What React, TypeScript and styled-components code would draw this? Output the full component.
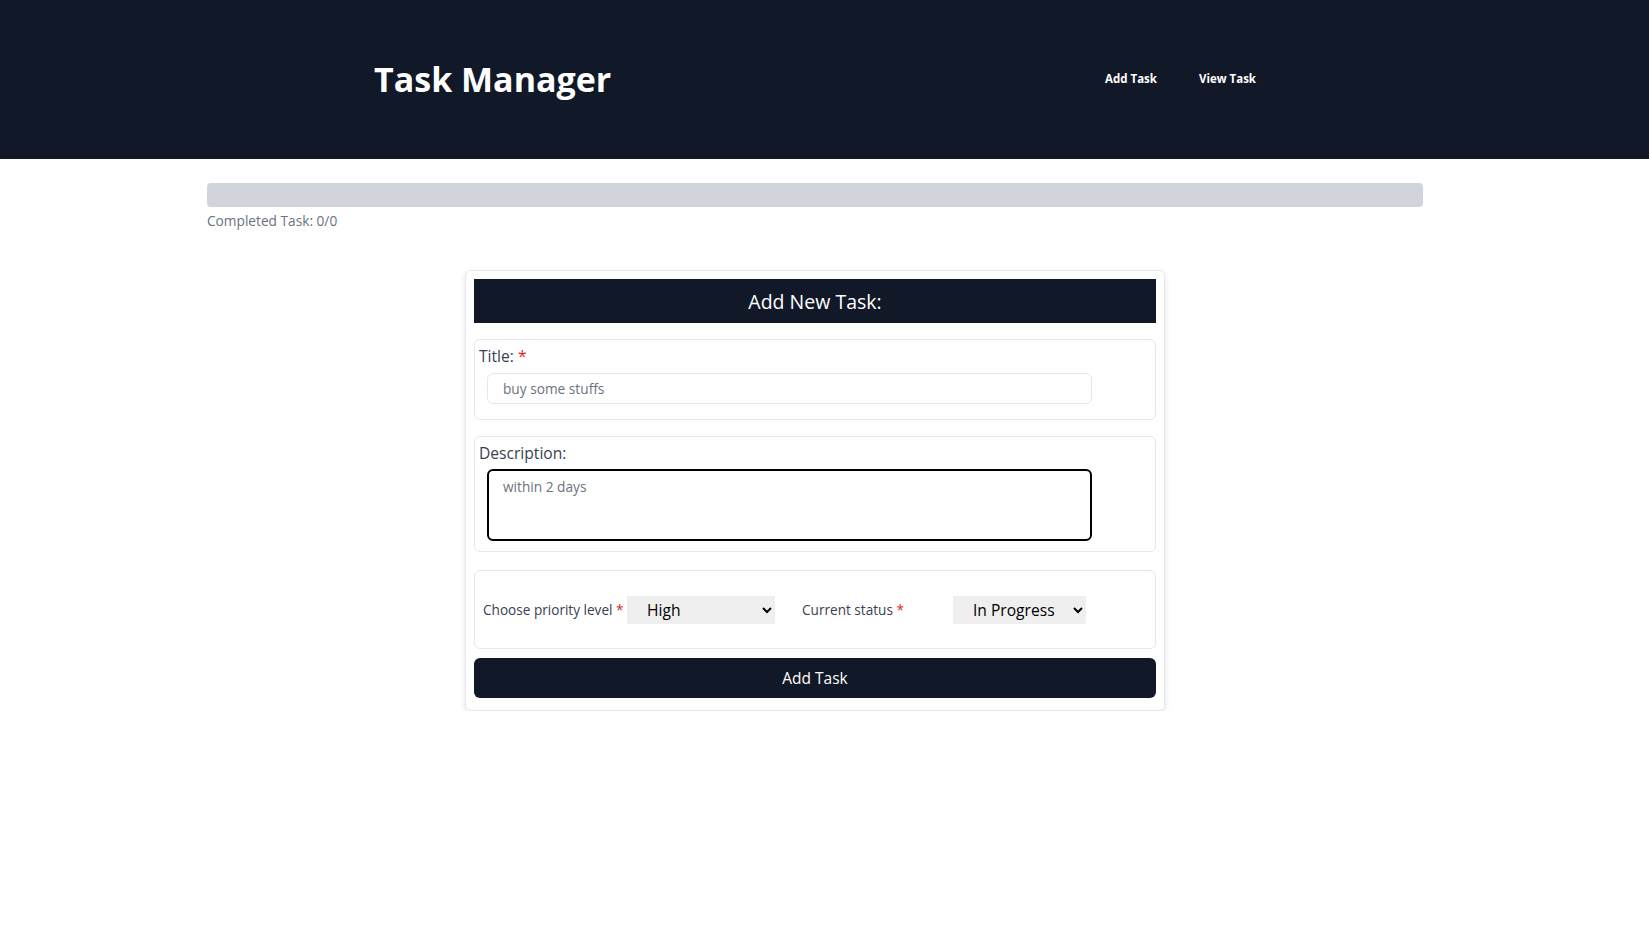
import React, { useEffect, useRef } from "react";
import styled, { createGlobalStyle } from "styled-components";

const Global = createGlobalStyle`
  html, body { margin: 0; padding: 0; background: #ffffff; }
  body { font-family: "Open Sans", "Noto Sans", sans-serif; }
  * { box-sizing: border-box; }
`;

const FONT = `"Open Sans", "Noto Sans", sans-serif`;

const Header = styled.header`
  background: #111827;
  height: 159px;
  width: 100%;
`;

const HeaderInner = styled.div`
  width: 1630px;
  height: 100%;
  padding: 0 374px;
  display: flex;
  align-items: center;
  justify-content: space-between;
`;

const Brand = styled.h1`
  margin: 0 0 2px;
  color: #ffffff;
  font-family: ${FONT};
  font-weight: 700;
  font-size: 34px;
`;

const Nav = styled.nav`
  display: flex;
  gap: 42px;
  margin-bottom: 2px;
`;

const NavLink = styled.a`
  color: #ffffff;
  font-family: ${FONT};
  font-weight: 700;
  font-size: 11.5px;
  text-decoration: none;
  cursor: pointer;
`;

const Main = styled.main`
  width: 1630px;
  padding: 24px 207px 0;
`;

const ProgressTrack = styled.div`
  height: 24px;
  background: #d1d5db;
  border-radius: 4px;
  overflow: hidden;
`;

const ProgressFill = styled.div`
  height: 100%;
  background: #111827;
`;

const ProgressText = styled.p`
  margin: 4px 0 0;
  font-family: ${FONT};
  font-size: 13.7px;
  color: #6b7280;
`;

const Card = styled.form`
  width: 700px;
  margin: 40px auto 0;
  border: 1px solid #e5e7eb;
  border-radius: 6px;
  padding: 8px 8px 12px;
  box-shadow: 0 3px 6px rgba(0, 0, 0, 0.1);
  display: flex;
  flex-direction: column;
`;

const CardTitle = styled.h2`
  margin: 0 0 16px;
  height: 44px;
  background: #111827;
  color: #ffffff;
  font-family: ${FONT};
  font-weight: 400;
  font-size: 19.5px;
  display: flex;
  align-items: center;
  justify-content: center;
`;

const Section = styled.div<{ $pb: number; $mb: number }>`
  border: 1px solid #e5e7eb;
  border-radius: 6px;
  padding: 4px 4px ${(p) => p.$pb}px;
  margin-bottom: ${(p) => p.$mb}px;
`;

const Label = styled.label`
  display: block;
  font-family: ${FONT};
  font-size: 15.6px;
  line-height: 24px;
  color: #374151;
`;

const Star = styled.span`
  color: #dc2626;
`;

const TextInput = styled.input`
  display: block;
  width: 605px;
  height: 31px;
  margin: 5px 0 0 8px;
  padding: 0 15px;
  border: 1px solid #e5e7eb;
  border-radius: 6px;
  font-family: ${FONT};
  font-size: 13.7px;
  color: #6b7280;
  outline: none;
`;

const TextArea = styled.textarea`
  display: block;
  width: 605px;
  height: 72px;
  margin: 4px 0 0 8px;
  padding: 6px 14px;
  border: 2px solid #000000;
  border-radius: 6px;
  font-family: ${FONT};
  font-size: 13.7px;
  color: #6b7280;
  resize: none;
  outline: none;
  caret-color: #000000;
`;

const OptionsSection = styled.div`
  border: 1px solid #e5e7eb;
  border-radius: 6px;
  height: 79px;
  margin-bottom: 9px;
  padding: 0 8px;
  display: flex;
  align-items: center;
`;

const InlineLabel = styled.label<{ $w: number }>`
  width: ${(p) => p.$w}px;
  font-family: ${FONT};
  font-size: 13.6px;
  color: #374151;
  flex-shrink: 0;
`;

const Select = styled.select<{ $w: number; $mr: number }>`
  width: ${(p) => p.$w}px;
  height: 28px;
  margin-right: ${(p) => p.$mr}px;
  border: none;
  background-color: #efefef;
  font-family: ${FONT};
  font-size: 15.6px;
  color: #000000;
  padding: 0 4px 0 16px;
  outline: none;
`;

const SubmitButton = styled.button`
  height: 40px;
  border: none;
  border-radius: 6px;
  background: #111827;
  color: #ffffff;
  font-family: ${FONT};
  font-size: 15.5px;
  cursor: pointer;
`;

export default function App() {
  const areaRef = useRef<HTMLTextAreaElement>(null);
  useEffect(() => {
    const el = areaRef.current;
    if (el) {
      el.focus();
      el.setSelectionRange(el.value.length, el.value.length);
    }
  }, []);

  return (
    <>
      <Global />
      <Header>
        <HeaderInner>
          <Brand>Task Manager</Brand>
          <Nav>
            <NavLink>Add Task</NavLink>
            <NavLink>View Task</NavLink>
          </Nav>
        </HeaderInner>
      </Header>
      <Main>
        <ProgressTrack>
          <ProgressFill style={{ width: "0%" }} />
        </ProgressTrack>
        <ProgressText>Completed Task: 0/0</ProgressText>
        <Card onSubmit={(e) => e.preventDefault()}>
          <CardTitle>Add New Task:</CardTitle>
          <Section $pb={15} $mb={16}>
            <Label>
              Title: <Star>*</Star>
            </Label>
            <TextInput defaultValue="buy some stuffs" />
          </Section>
          <Section $pb={10} $mb={18}>
            <Label>Description:</Label>
            <TextArea ref={areaRef} defaultValue="within 2 days" />
          </Section>
          <OptionsSection>
            <InlineLabel $w={144}>
              Choose priority level <Star>*</Star>
            </InlineLabel>
            <Select $w={148} $mr={27} defaultValue="High">
              <option>Low</option>
              <option>Medium</option>
              <option>High</option>
            </Select>
            <InlineLabel $w={151}>
              Current status <Star>*</Star>
            </InlineLabel>
            <Select $w={133} $mr={0} defaultValue="In Progress">
              <option>To Do</option>
              <option>In Progress</option>
              <option>Completed</option>
            </Select>
          </OptionsSection>
          <SubmitButton type="submit">Add Task</SubmitButton>
        </Card>
      </Main>
    </>
  );
}
